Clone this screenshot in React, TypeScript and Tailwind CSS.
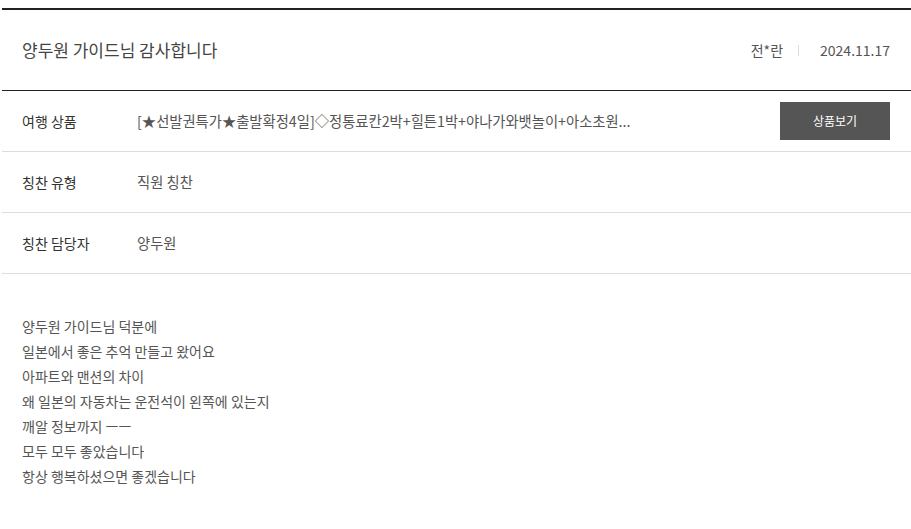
const font = { fontFamily: '"Noto Sans CJK KR", "Noto Sans", sans-serif' };

const rows = [
  {
    label: "여행 상품",
    value: "[★선발권특가★출발확정4일]◇정통료칸2박+힐튼1박+야나가와뱃놀이+아소초원...",
    button: true,
  },
  { label: "칭찬 유형", value: "직원 칭찬" },
  { label: "칭찬 담당자", value: "양두원" },
];

const lines = [
  "양두원 가이드님 덕분에",
  "일본에서 좋은 추억 만들고 왔어요",
  "아파트와 맨션의 차이",
  "왜 일본의 자동차는 운전석이 왼쪽에 있는지",
  "깨알 정보까지 ㅡㅡ",
  "모두 모두 좋았습니다",
  "항상 행복하셨으면 좋겠습니다",
];

export default function App() {
  return (
    <div className="min-h-[529px] bg-white pt-[8px] pl-[2px]" style={font}>
      <div className="border-t-2 border-[#222]">
        <div className="flex h-[81px] items-center justify-between border-b border-[#222] pl-5 pr-[21px]">
          <h1 className="text-[17px] font-normal text-[#444]">양두원 가이드님 감사합니다</h1>
          <div className="flex items-center text-[#555]">
            <span className="text-[14px]">전*란</span>
            <span className="mx-[15px] h-[11px] w-px bg-[#ddd]" />
            <span className="pl-[6px] text-[14px]">2024.11.17</span>
          </div>
        </div>

        {rows.map((row) => (
          <div
            key={row.label}
            className="flex h-[61px] items-center border-b border-[#ddd] pl-5 pr-[21px] text-[14px]"
          >
            <div className="w-[115px] shrink-0 text-[#333]">{row.label}</div>
            <div className="flex-1 truncate text-[14.3px] text-[#555]">{row.value}</div>
            {row.button && (
              <button className="h-[38px] w-[110px] shrink-0 bg-[#555] text-[12px] text-white">
                상품보기
              </button>
            )}
          </div>
        ))}

        <div className="px-5 pt-[40px] text-[14px] leading-[25px] text-[#555]">
          {lines.map((l) => (
            <p key={l}>{l}</p>
          ))}
        </div>
      </div>
    </div>
  );
}
